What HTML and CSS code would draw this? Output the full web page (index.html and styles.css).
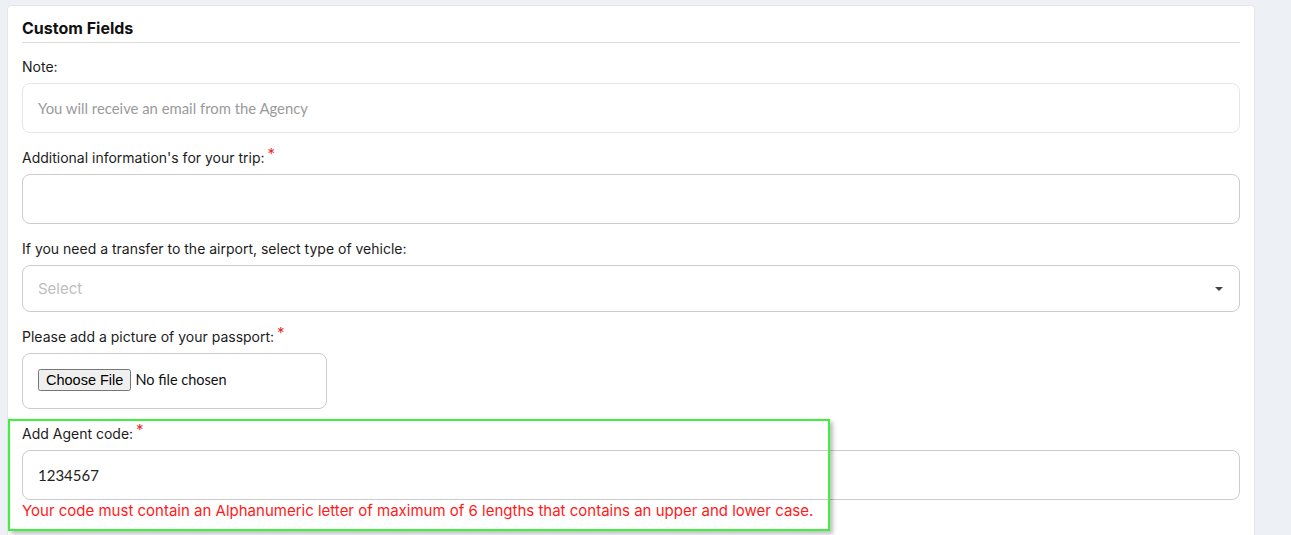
FILE: index.html
```html
<!DOCTYPE html>
<html>
<head>
<meta charset="utf-8">
<link rel="stylesheet" href="styles.css">
</head>
<body>
<div class="page">
  <section class="card">
    <h2 class="card-title">Custom Fields</h2>

    <div class="field">
      <div class="label">Note:</div>
      <div class="note-box">You will receive an email from the Agency</div>
    </div>

    <div class="field">
      <div class="label">Additional information's for your trip:<span class="req">*</span></div>
      <input class="text-input" type="text">
    </div>

    <div class="field">
      <div class="label">If you need a transfer to the airport, select type of vehicle:</div>
      <div class="select-box">
        <span class="select-placeholder">Select</span>
        <span class="caret"></span>
      </div>
    </div>

    <div class="field">
      <div class="label">Please add a picture of your passport:<span class="req">*</span></div>
      <div class="file-box">
        <input class="file-input" type="file">
      </div>
    </div>

    <div class="field field-highlighted">
      <div class="highlight"></div>
      <div class="label">Add Agent code:<span class="req">*</span></div>
      <input class="text-input" type="text" value="1234567">
      <div class="error">Your code must contain an Alphanumeric letter of maximum of 6 lengths that contains an upper and lower case.</div>
    </div>
  </section>
</div>
</body>
</html>
```

FILE: styles.css
```css
* { box-sizing: border-box; }

html, body {
  margin: 0;
  padding: 0;
  background: #edf1f5;
  height: 100%;
  overflow: hidden;
}

body {
  font-family: Inter, "Liberation Sans", sans-serif;
  color: #1a1a1a;
}

.page {
  padding: 5px 36px 0 7px;
}

.card {
  background: #fff;
  border: 1px solid #e3e6ea;
  border-radius: 4px;
  padding: 10px 14px 40px 14px;
}

.card-title {
  margin: 0 0 14px 0;
  font-size: 16px;
  font-weight: 700;
  line-height: 24px;
  color: #111;
  border-bottom: 1px solid #dcdcdc;
  padding-bottom: 2px;
}

.field {
  margin-bottom: 15px;
}

.label {
  font-size: 14px;
  line-height: 20px;
  height: 20px;
  margin-bottom: 6px;
  color: #1c1c1c;
}

.req {
  color: #e8302a;
  font-size: 15px;
  line-height: 0;
  position: relative;
  top: -4px;
  margin-left: 3px;
}

.note-box {
  height: 50px;
  border: 1px solid #e6e6e6;
  border-radius: 8px;
  padding: 0 15px;
  display: flex;
  align-items: center;
  font-family: Lato, "Liberation Sans", sans-serif;
  font-size: 14.85px;
  color: #9a9a9a;
}

.text-input {
  display: block;
  width: 100%;
  height: 50px;
  border: 1px solid #cccccc;
  border-radius: 8px;
  padding: 0 15px;
  font-family: Lato, "Liberation Sans", sans-serif;
  font-size: 15px;
  color: #222;
  background: #fff;
  outline: none;
}

.select-box {
  height: 47px;
  border: 1px solid #cccccc;
  border-radius: 8px;
  padding: 0 15px;
  display: flex;
  align-items: center;
  justify-content: space-between;
}

.select-placeholder {
  font-size: 15px;
  color: #bdbdbd;
}

.caret {
  width: 0;
  height: 0;
  border-left: 4px solid transparent;
  border-right: 4px solid transparent;
  border-top: 4px solid #444;
  margin-right: 1px;
}

.file-box {
  width: 305px;
  height: 56px;
  border: 1px solid #cccccc;
  border-radius: 8px;
  padding: 15px;
}

.file-input {
  display: block;
  font-family: Lato, "Liberation Sans", sans-serif;
  font-size: 14.5px;
  color: #111;
}

.field-highlighted {
  position: relative;
}

.highlight {
  position: absolute;
  left: -14px;
  top: -5px;
  width: 822px;
  height: 112px;
  border: 2px solid #3cf23c;
  box-shadow: 3px 3px 4px rgba(0, 0, 0, 0.25);
  pointer-events: none;
}

.error {
  margin-top: 1px;
  font-size: 15px;
  line-height: 20px;
  color: #ff1a1a;
}
```
